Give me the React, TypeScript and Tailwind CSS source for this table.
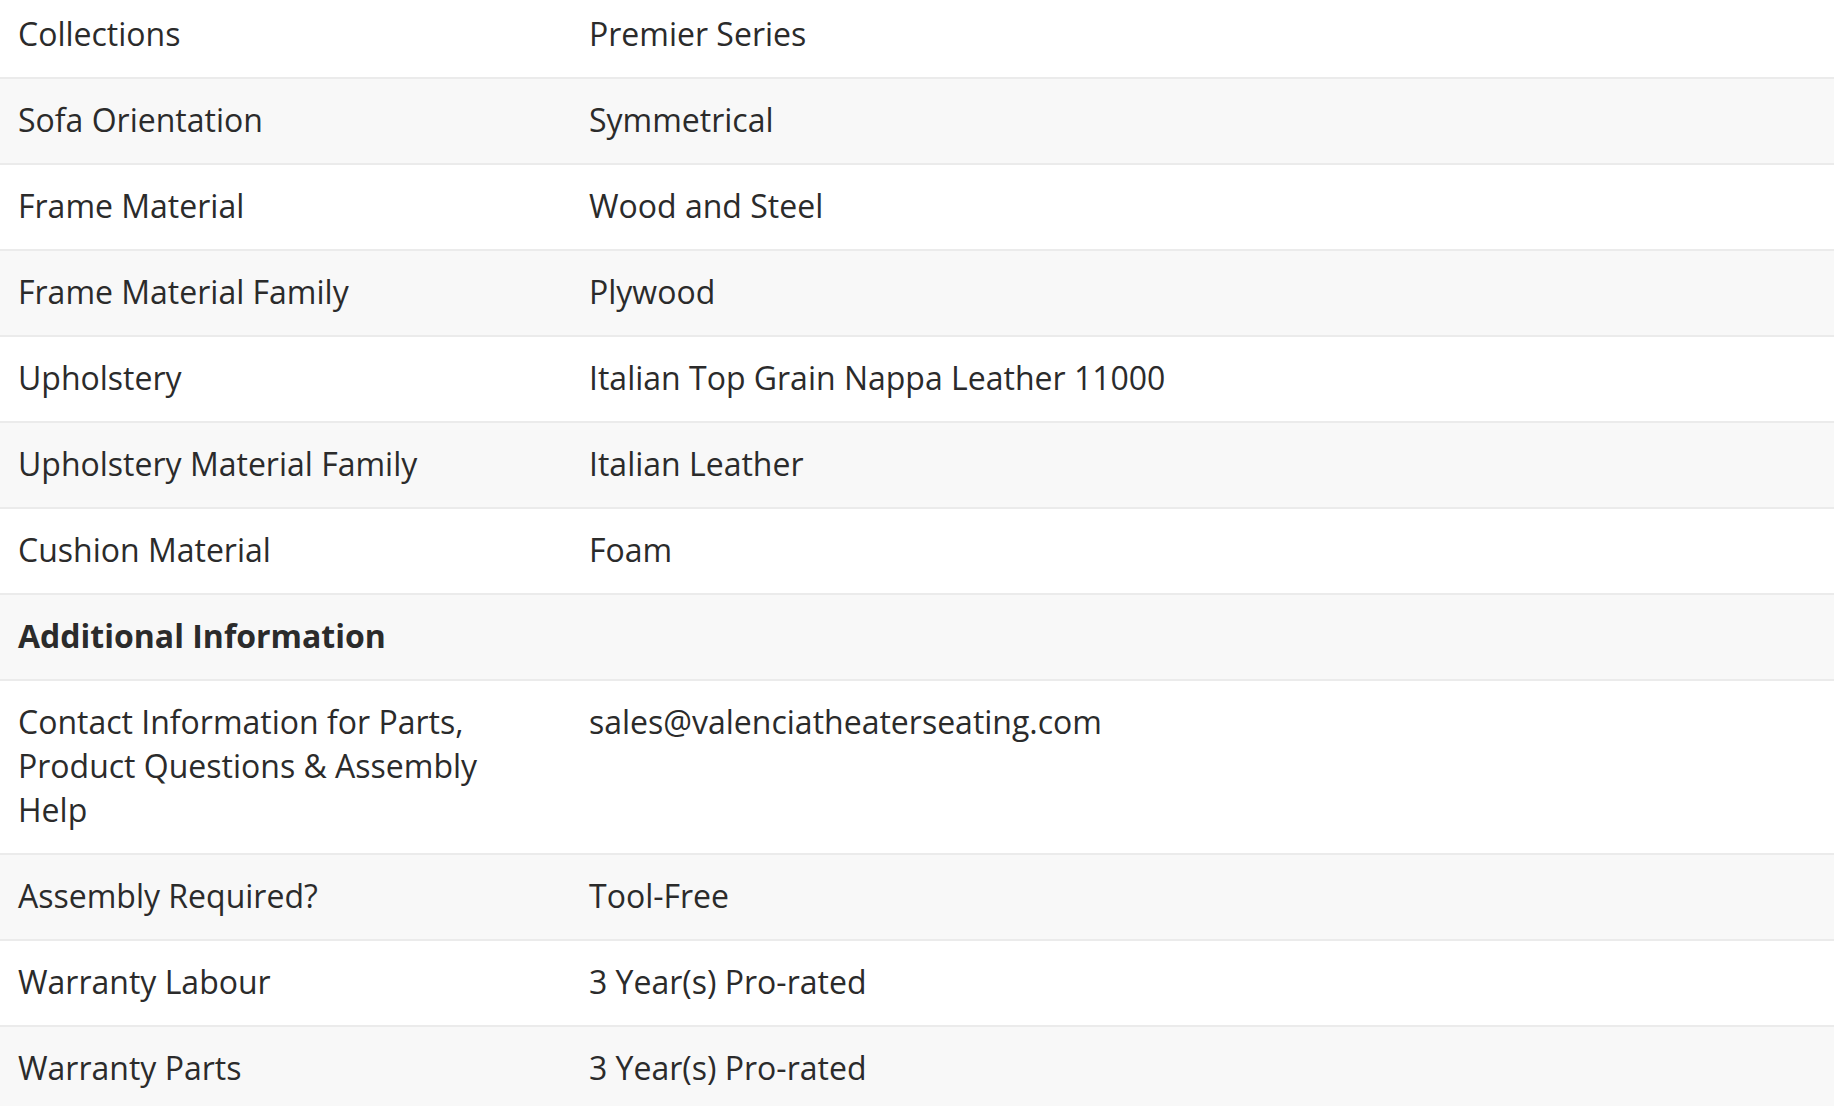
import React from 'react';

interface SpecRow {
    label: string;
    value?: string;
    heading?: boolean;
}

const rows: SpecRow[] = [
    { label: 'Collections', value: 'Premier Series' },
    { label: 'Sofa Orientation', value: 'Symmetrical' },
    { label: 'Frame Material', value: 'Wood and Steel' },
    { label: 'Frame Material Family', value: 'Plywood' },
    { label: 'Upholstery', value: 'Italian Top Grain Nappa Leather 11000' },
    { label: 'Upholstery Material Family', value: 'Italian Leather' },
    { label: 'Cushion Material', value: 'Foam' },
    { label: 'Additional Information', heading: true },
    { label: 'Contact Information for Parts, Product Questions & Assembly Help', value: 'sales@valenciatheaterseating.com' },
    { label: 'Assembly Required?', value: 'Tool-Free' },
    { label: 'Warranty Labour', value: '3 Year(s) Pro-rated' },
    { label: 'Warranty Parts', value: '3 Year(s) Pro-rated' },
];

const App: React.FC = () => {
    return (
        <div className="min-h-screen bg-white overflow-hidden">
            {/* page is scrolled a little, first row is cut at the top */}
            <div className="-mt-[9px] w-full text-[#2b2b2b] text-[32px] leading-[44px] font-['Open_Sans',sans-serif]">
                {rows.map((row, index) => (
                    <div
                        key={row.label}
                        className={`flex border-t-2 border-[#ebebeb] ${index % 2 === 1 ? 'bg-[#f8f8f8]' : 'bg-white'}`}
                    >
                        <div className={`w-[570px] shrink-0 pl-[18px] pr-[70px] pt-[19px] pb-[21px] ${row.heading ? 'font-bold' : ''}`}>
                            {row.label}
                        </div>
                        <div className="flex-1 pl-[19px] pr-[18px] pt-[19px] pb-[21px]">{row.value}</div>
                    </div>
                ))}
            </div>
        </div>
    );
};

export default App;
